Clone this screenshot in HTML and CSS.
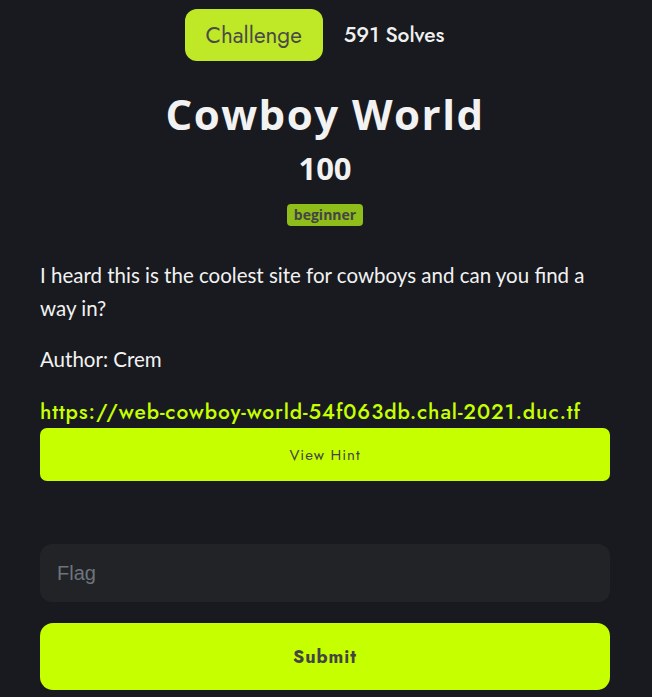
FILE: index.html
```html
<!DOCTYPE html>
<html>
<head>
<meta charset="utf-8">
<link rel="stylesheet" href="styles.css">
</head>
<body>
<div class="modal">
  <div class="tabs">
    <span class="tab active">Challenge</span>
    <span class="tab">591 Solves</span>
  </div>
  <h1 class="title">Cowboy World</h1>
  <div class="points">100</div>
  <div class="tags"><span class="badge">beginner</span></div>
  <div class="desc">
    <p>I heard this is the coolest site for cowboys and can you find a way in?</p>
    <p>Author: Crem</p>
    <p class="link-p"><a class="link" href="#">https://web-cowboy-world-54f063db.chal-2021.duc.tf</a></p>
  </div>
  <button class="hint">View Hint</button>
  <input class="flag" type="text" placeholder="Flag">
  <button class="submit">Submit</button>
</div>
</body>
</html>
```
FILE: styles.css
```css
html, body {
  margin: 0;
  padding: 0;
  background: #181a1f;
}
body {
  font-family: "Lato", sans-serif;
  color: #f2f2f2;
}
.modal {
  width: 570px;
  margin: 0 0 0 40px;
  padding-top: 9px;
  display: flex;
  flex-direction: column;
}
.tabs {
  display: flex;
  justify-content: center;
}
.tab {
  font-family: "Jost", "Open Sans", sans-serif;
  font-size: 21px;
  padding: 0 21px;
  height: 52px;
  line-height: 52px;
  border-radius: 12px;
  color: #f0f0f0;
  font-weight: 500;
}
.tab.active {
  background: #bfe826;
  color: #4a4a4a;
  font-weight: 400;
  font-size: 22.5px;
}
.title {
  margin: 28px 0 0;
  text-align: center;
  font-family: "Open Sans", sans-serif;
  font-weight: 700;
  font-size: 42px;
  line-height: 50px;
  letter-spacing: 1.5px;
  color: #f2f2f2;
}
.points {
  text-align: center;
  font-family: "Open Sans", sans-serif;
  font-weight: 700;
  font-size: 31px;
  line-height: 40px;
  margin-top: 9px;
  color: #f2f2f2;
}
.tags {
  text-align: center;
  margin-top: 16px;
  line-height: 0;
}
.badge {
  display: inline-block;
  background: #8fbd1a;
  color: #444;
  font-family: "Open Sans", sans-serif;
  font-weight: 700;
  font-size: 14px;
  line-height: 22px;
  padding: 0 7px;
  border-radius: 4px;
}
.desc {
  margin-top: 33px;
  font-size: 20.5px;
  line-height: 33px;
}
.desc p {
  margin: 0 0 18px;
}
.desc p.link-p {
  margin: 20px 0 0;
  line-height: 31px;
}
.link {
  color: #c6ff00;
  text-decoration: none;
  font-family: "Jost", "Open Sans", sans-serif;
  font-weight: 500;
  font-size: 21px;
  letter-spacing: 0.9px;
}
.hint {
  display: block;
  width: 570px;
  height: 53px;
  margin-top: 0;
  border: 0;
  border-radius: 7px;
  background: #c6ff00;
  color: #444;
  font-family: "Jost", "Open Sans", sans-serif;
  font-size: 15px;
  letter-spacing: 1px;
}
.flag {
  display: block;
  box-sizing: border-box;
  width: 570px;
  height: 58px;
  margin-top: 63px;
  border: 0;
  border-radius: 12px;
  background: #222326;
  padding: 0 17px;
  font-family: "Liberation Sans", sans-serif;
  font-size: 20px;
  color: #eee;
  outline: none;
}
.flag::placeholder {
  color: #6c757d;
}
.submit {
  display: block;
  width: 570px;
  height: 67px;
  margin-top: 21px;
  border: 0;
  border-radius: 13px;
  background: #c6ff00;
  color: #444;
  font-family: "Jost", "Open Sans", sans-serif;
  font-weight: 700;
  font-size: 18px;
  letter-spacing: 1px;
}
```
